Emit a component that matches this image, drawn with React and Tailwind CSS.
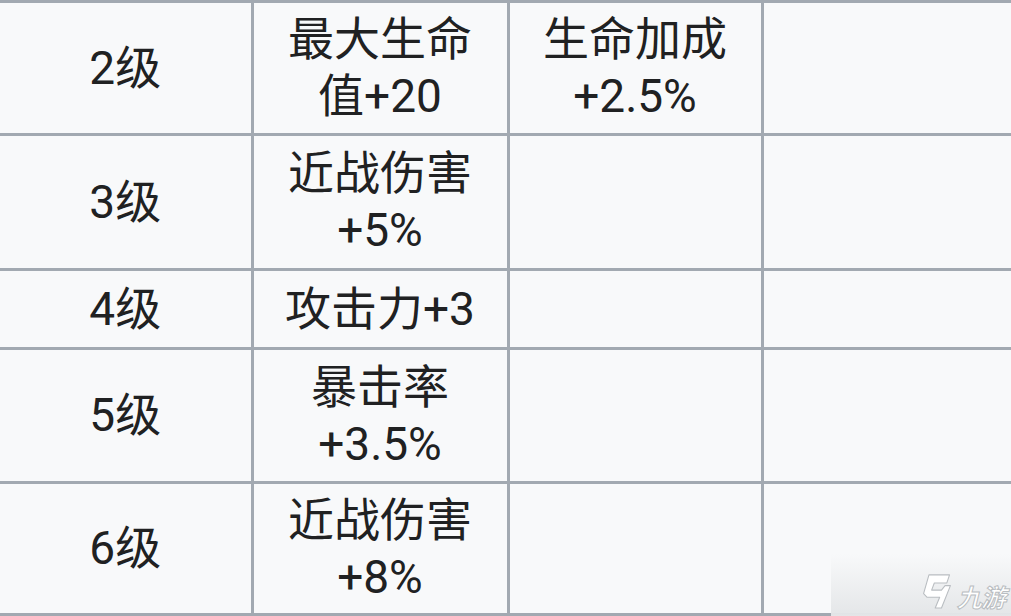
import React from "react";

const rows = [
  { level: "2级", bonus: ["最大生命", "值+20"], extra: ["生命加成", "+2.5%"], h: "h-[133px]" },
  { level: "3级", bonus: ["近战伤害", "+5%"], extra: [], h: "h-[135px]" },
  { level: "4级", bonus: ["攻击力+3"], extra: [], h: "h-[79px]" },
  { level: "5级", bonus: ["暴击率", "+3.5%"], extra: [], h: "h-[134px]" },
  { level: "6级", bonus: ["近战伤害", "+8%"], extra: [], h: "h-[132px]" },
];

const Lines = ({ lines }) => (
  <div className="flex flex-col items-center">
    {lines.map((l) => (
      <span key={l} className="leading-[57px]">
        {l}
      </span>
    ))}
  </div>
);

const Watermark = () => (
  <div className="pointer-events-none absolute bottom-0 right-0 flex h-[62px] w-[180px] items-end justify-end bg-gradient-to-b from-transparent to-[#e4e6e8] pb-[4px] pr-[6px]">
    <svg width="34" height="40" viewBox="0 0 38 42" className="mb-[1px]">
      <path
        d="M10 3 L33 3 L30 12 L16 12 L13 20 L24 20 L28 15 L34 15 L24 40 L17 40 L22 28 L8 28 L4 24 Z"
        fill="#ffffff"
        stroke="#b9bdc1"
        strokeWidth="1.2"
        strokeLinejoin="round"
      />
    </svg>
    <span className="ml-[3px] text-[25px] font-bold italic leading-[32px] tracking-[-1px] text-white [-webkit-text-stroke:1px_#b9bdc1] [font-family:'Noto_Sans_CJK_SC',sans-serif]">
      九游
    </span>
  </div>
);

export default function App() {
  return (
    <div className="relative h-[616px] w-[1011px] overflow-hidden bg-[#f8f9fa] text-[46px] text-[#202122] [font-family:Roboto,'Noto_Sans_CJK_SC',sans-serif]">
      <table className="w-[1011px] table-fixed border-collapse border-t-[3px] border-[#a2a9b1]">
        <colgroup>
          <col className="w-[252px]" />
          <col className="w-[256px]" />
          <col className="w-[254px]" />
          <col />
        </colgroup>
        <tbody>
          {rows.map((r) => (
            <tr key={r.level} className={r.h}>
              <td className="border-b-[3px] border-r-[3px] border-[#a2a9b1] p-0 text-center align-middle">
                {r.level}
              </td>
              <td className="border-b-[3px] border-r-[3px] border-[#a2a9b1] p-0 text-center align-middle">
                <Lines lines={r.bonus} />
              </td>
              <td className="border-b-[3px] border-r-[3px] border-[#a2a9b1] p-0 text-center align-middle">
                <Lines lines={r.extra} />
              </td>
              <td className="border-b-[3px] border-[#a2a9b1] p-0"></td>
            </tr>
          ))}
        </tbody>
      </table>
      <Watermark />
    </div>
  );
}
